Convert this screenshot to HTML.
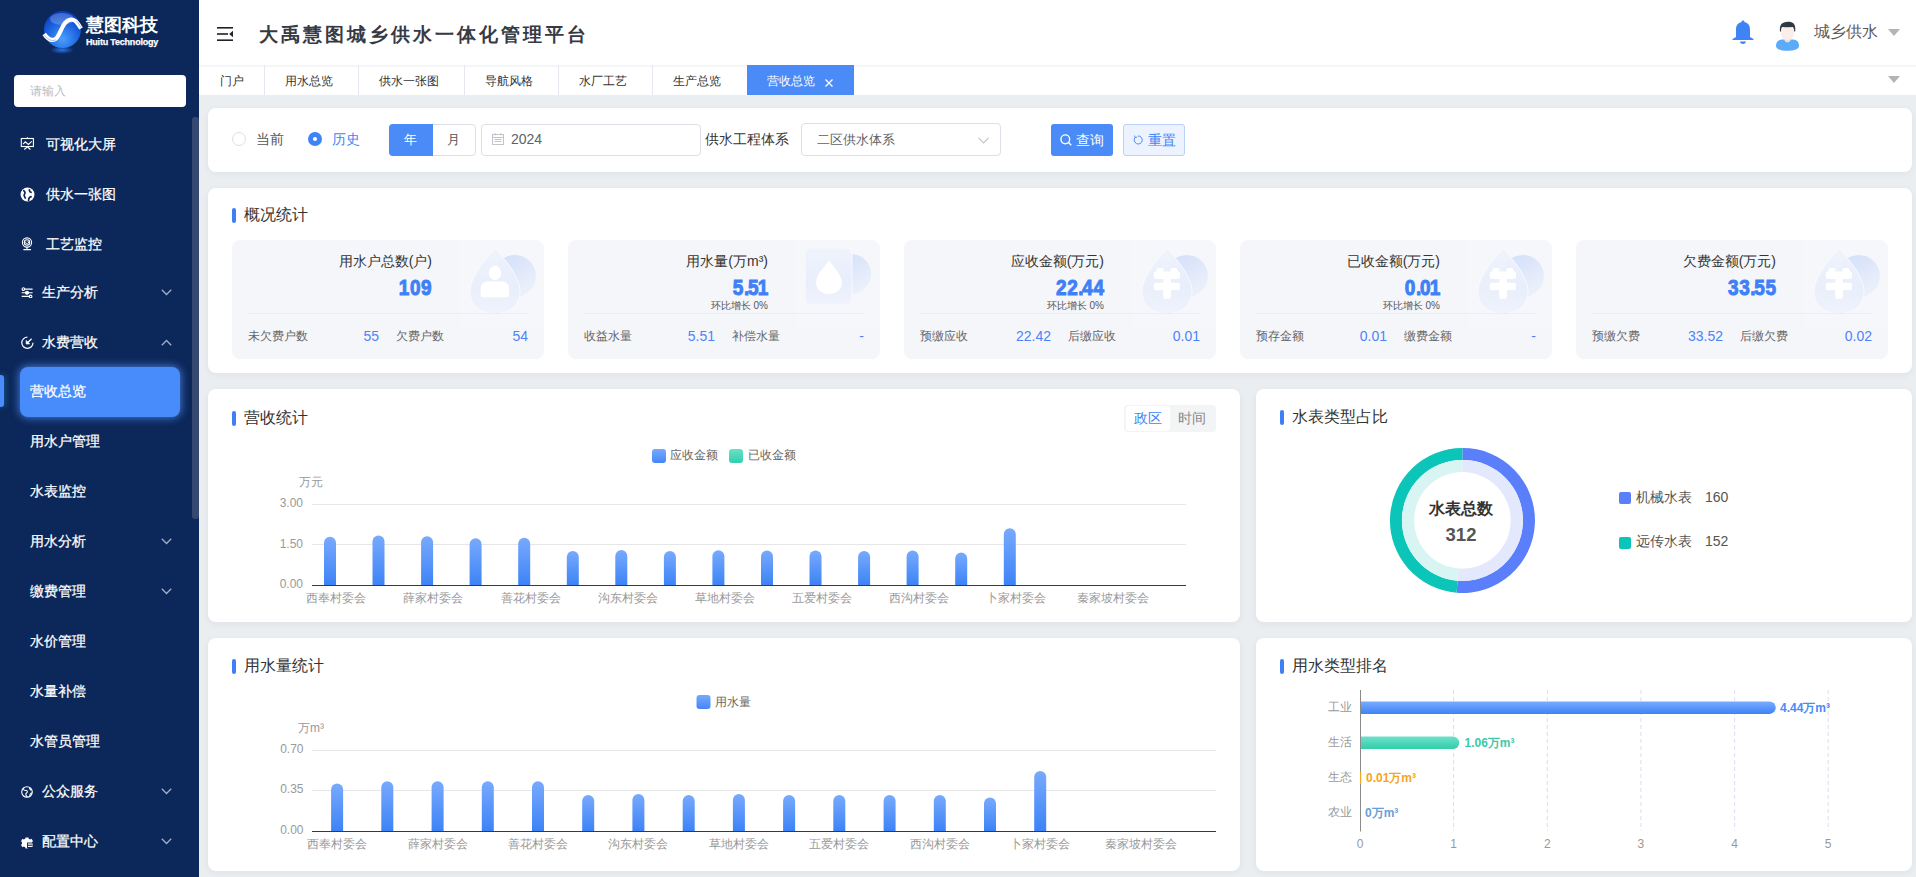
<!DOCTYPE html>
<html><head><meta charset="utf-8">
<style>
*{box-sizing:border-box;margin:0;padding:0}
html,body{width:1916px;height:877px;overflow:hidden;background:#ebeef1;font-family:"Liberation Sans",sans-serif;color:#333}
.abs{position:absolute}
.nw{white-space:nowrap}
#side{position:absolute;left:0;top:0;width:199px;height:877px;background:#0c2759}
.mi{position:absolute;left:0;width:199px;height:20px;line-height:20px;color:#fff;font-size:14px;white-space:nowrap;-webkit-text-stroke:0.25px #fff}
.mi .ic{position:absolute;left:20px;top:3px;width:14px;height:14px}
.mi .tx{position:absolute;left:46px;top:0}
.mi .sub{left:30px}
.chev{position:absolute}
#hdr{position:absolute;left:199px;top:0;width:1717px;height:65px;background:#fff}
#tabs{position:absolute;left:199px;top:65px;width:1717px;height:30px;background:#fff;box-shadow:inset 0 2px 3px -2px rgba(0,0,0,.06)}
.tab{position:absolute;top:0;height:30px;line-height:30px;font-size:12px;color:#333;text-align:center;border-right:1px solid #e6e8ee}
.card{position:absolute;background:#fff;border-radius:8px;box-shadow:0 2px 7px rgba(40,50,70,.06)}
.ttl{position:absolute;font-size:16px;color:#333;line-height:16px;white-space:nowrap}
.ttl:before{content:"";position:absolute;left:-12px;top:1px;width:4px;height:15px;border-radius:2px;background:#3e7ff5}
.sc{position:absolute;top:240px;width:312px;height:119px;background:#f5f6fa;border-radius:8px;overflow:hidden}
.sc .t{position:absolute;top:13px;right:112px;font-size:14px;color:#333;line-height:16px;white-space:nowrap}
.sc .v{position:absolute;top:35px;right:112px;font-size:22px;line-height:26px;color:#3f80f6;font-weight:bold;white-space:nowrap;transform:scaleX(.86);transform-origin:right center;letter-spacing:0.8px;margin-right:-0.7px;-webkit-text-stroke:1px #3f80f6}
.sc .v .o{margin-left:-1.8px}.sc .v .p{letter-spacing:-1.6px}
.sc .hb{position:absolute;top:60px;right:112px;font-size:10px;line-height:12px;color:#555;white-space:nowrap}
.sc .dv{position:absolute;left:16px;right:16px;top:73px;height:1px;background:#eceef4}
.sc .bl{position:absolute;top:89px;font-size:12px;line-height:14px;color:#666;white-space:nowrap}
.sc .bn{position:absolute;top:89px;font-size:14px;line-height:14px;color:#4d83f7;white-space:nowrap;text-align:right}
.axl{position:absolute;font-size:12px;color:#999;line-height:12px;white-space:nowrap}
</style></head><body>
<svg width="0" height="0" style="position:absolute"><defs>
<linearGradient id="cg" x1="0.2" y1="0" x2="0.8" y2="1"><stop offset="0" stop-color="#d3e0f9"/><stop offset="1" stop-color="#eef2fb"/></linearGradient>
<linearGradient id="dg" x1="0" y1="0" x2="0" y2="1"><stop offset="0" stop-color="#eff3fc" stop-opacity=".95"/><stop offset=".6" stop-color="#e8eefb" stop-opacity=".95"/><stop offset="1" stop-color="#eff2fb" stop-opacity=".95"/></linearGradient>
</defs></svg>

<!-- SIDEBAR -->
<div id="side">
 <svg class="abs" style="left:40px;top:8px" width="46" height="48" viewBox="0 0 46 48">
  <defs>
   <radialGradient id="gb" cx="50%" cy="75%" r="70%"><stop offset="0" stop-color="#4aa0ff"/><stop offset=".6" stop-color="#1d64e0"/><stop offset="1" stop-color="#0b3fc0"/></radialGradient>
   <radialGradient id="gl" cx="50%" cy="50%" r="50%"><stop offset="0" stop-color="#2a7bff" stop-opacity=".9"/><stop offset="1" stop-color="#2a7bff" stop-opacity="0"/></radialGradient>
  </defs>
  <ellipse cx="22" cy="42" rx="12" ry="4" fill="url(#gl)"/>
  <circle cx="22.5" cy="21.6" r="18.5" fill="url(#gb)"/>
  <ellipse cx="22" cy="11" rx="12" ry="6" fill="#fff" opacity=".22"/>
  <path d="M4.2 26 C8 31.5 12 33 15.5 31 C19 29 20.5 21 25 15 C28.5 11 33 10.5 36 13.5 C38 15.5 39.5 18 41 20.5" fill="none" stroke="#fff" stroke-width="4.2"/>
  <path d="M4.6 27.2 C8 32 12 33.6 15.8 31.8 M36.5 13 C38.5 15 39.8 17.5 41 19.5" fill="none" stroke="#5a90e8" stroke-width=".7" opacity=".8"/>
 </svg>
 <div class="abs nw" style="left:86px;top:13px;font-size:18px;line-height:24px;font-weight:bold;color:#fff;letter-spacing:0px">慧图科技</div>
 <div class="abs nw" style="left:86px;top:37px;font-size:9px;line-height:11px;font-weight:bold;color:#fff;letter-spacing:-0.2px;-webkit-text-stroke:0.25px #fff">Huitu Technology</div>
 <div class="abs" style="left:14px;top:75px;width:172px;height:32px;background:#fff;border-radius:4px"></div>
 <div class="abs nw" style="left:30px;top:83px;font-size:12px;line-height:16px;color:#b8bcc6">请输入</div>
 <div class="abs" style="left:192px;top:117px;width:7px;height:402px;background:#36486f;border-radius:3px"></div>

 <div class="mi" style="top:134px">
  <svg class="ic" style="left:20px;top:1px;width:14px;height:16px" width="14" height="16" viewBox="0 0 14 16" fill="none" stroke="#fff" stroke-width="1.1"><rect x="1.3" y="3.5" width="12.1" height="8"/><path d="M3.1 9.2 L5.3 6.8 L8.4 9.4 L11.8 6.3"/><path d="M4.3 14.5 L7.4 11.8 L10.4 14.5 M7.4 2.2 V3.5"/></svg>
  <span class="tx" style="left:46px">可视化大屏</span></div>
 <div class="mi" style="top:184px">
  <svg class="ic" style="left:19.5px;top:2.5px;width:15px;height:15px" width="15" height="15" viewBox="0 0 14 14"><circle cx="7" cy="7" r="6.5" fill="#fff"/><path d="M3 3 C5 4 5 6 4 7 C3 8 5 9 5 11 M9 2 C8 4 10 5 11 5 M8 13 C8 11 9 9 11 9" fill="none" stroke="#0c2759" stroke-width="1.6"/></svg>
  <span class="tx" style="left:46px">供水一张图</span></div>
 <div class="mi" style="top:234px">
  <svg class="ic" style="left:21px;top:3px;width:13px;height:14px" width="13" height="14" viewBox="0 0 13 14" fill="none" stroke="#fff" stroke-width="1.1"><circle cx="6" cy="5.5" r="4.6"/><circle cx="6" cy="5.5" r="2.7"/><path d="M6.8 4.2 A1.4 1.4 0 1 1 5 4.6" stroke-width="1"/><path d="M6 10.1 V12.3 M2.4 12.6 H10"/></svg>
  <span class="tx" style="left:46px">工艺监控</span></div>
 <div class="mi" style="top:282px">
  <svg class="ic" style="left:21px;top:3px;width:12px;height:13px" width="12" height="13" viewBox="0 0 12 13" fill="none" stroke="#fff" stroke-width="1.1"><path d="M3.7 4.1 H11.6 M0.7 7.7 H11.6 M0.7 11.4 H8.3"/><circle cx="2.4" cy="4.1" r="1.3"/><circle cx="6" cy="7.7" r="1.5" fill="#fff"/><circle cx="9.6" cy="11.4" r="1.3"/></svg>
  <span class="tx" style="left:42px">生产分析</span>
  <svg class="chev" width="11" height="7" viewBox="0 0 11 7" fill="none" stroke="#a3aec8" stroke-width="1.3" style="left:160.5px;top:6.5px"><path d="M0.8 0.8 L5.5 5.5 L10.2 0.8"/></svg></div>
 <div class="mi" style="top:332px">
  <svg class="ic" style="left:20.7px;top:4.3px;width:13px;height:13px" width="13" height="13" viewBox="0 0 13 13" fill="none" stroke="#fff" stroke-width="1.2"><path d="M12 6.8 A5.6 5.6 0 1 1 6.4 1.2"/><path d="M10.6 2.8 L6 7.2"/><path d="M5.2 4.4 V7.9 H8.6 Z" fill="#fff" stroke-width=".8"/></svg>
  <span class="tx" style="left:42px">水费营收</span>
  <svg class="chev" width="11" height="7" viewBox="0 0 11 7" fill="none" stroke="#a3aec8" stroke-width="1.3" style="left:160.5px;top:6.5px"><path d="M0.8 6.2 L5.5 1.5 L10.2 6.2"/></svg></div>

 <div class="abs" style="left:0;top:375px;width:4px;height:32px;background:#4a8cfb;border-radius:0 3px 3px 0;box-shadow:0 0 6px rgba(40,200,255,.5)"></div>
 <div class="abs" style="left:20px;top:367px;width:160px;height:50px;background:#488cfc;border-radius:8px;box-shadow:0 0 8px 1px rgba(85,150,255,.75)"></div>
 <div class="mi" style="top:381px"><span class="tx" style="left:30px">营收总览</span></div>
 <div class="mi" style="top:431px"><span class="tx" style="left:30px">用水户管理</span></div>
 <div class="mi" style="top:481px"><span class="tx" style="left:30px">水表监控</span></div>
 <div class="mi" style="top:531px"><span class="tx" style="left:30px">用水分析</span>
  <svg class="chev" width="11" height="7" viewBox="0 0 11 7" fill="none" stroke="#a3aec8" stroke-width="1.3" style="left:160.5px;top:6.5px"><path d="M0.8 0.8 L5.5 5.5 L10.2 0.8"/></svg></div>
 <div class="mi" style="top:581px"><span class="tx" style="left:30px">缴费管理</span>
  <svg class="chev" width="11" height="7" viewBox="0 0 11 7" fill="none" stroke="#a3aec8" stroke-width="1.3" style="left:160.5px;top:6.5px"><path d="M0.8 0.8 L5.5 5.5 L10.2 0.8"/></svg></div>
 <div class="mi" style="top:631px"><span class="tx" style="left:30px">水价管理</span></div>
 <div class="mi" style="top:681px"><span class="tx" style="left:30px">水量补偿</span></div>
 <div class="mi" style="top:731px"><span class="tx" style="left:30px">水管员管理</span></div>
 <div class="mi" style="top:781px">
  <svg class="ic" style="left:21px;top:5px;width:12px;height:12px" width="12" height="12" viewBox="0 0 12 12" fill="none" stroke="#fff" stroke-width="1.1"><circle cx="6" cy="6" r="5.3"/><path d="M2.5 1.8 C1.8 3.5 3.5 4.8 5 4.5 C6.5 4.2 6.8 6 5.5 7 C4.2 8 5 10 6.5 11 M8.5 1.5 C8 3 9.5 3.5 10.2 4.5 M11 7 C9.5 7 8.5 8.5 9 10"/></svg>
  <span class="tx" style="left:42px">公众服务</span>
  <svg class="chev" width="11" height="7" viewBox="0 0 11 7" fill="none" stroke="#a3aec8" stroke-width="1.3" style="left:160.5px;top:6.5px"><path d="M0.8 0.8 L5.5 5.5 L10.2 0.8"/></svg></div>
 <div class="mi" style="top:831px">
  <svg class="ic" style="left:21px;top:5.5px;width:12px;height:12px" width="12" height="12" viewBox="0 0 13 13" fill="#fff"><path d="M5 0.5 H8 L8.5 2 L10 2.8 L11.5 2 L13 4.5 L12 5.5 V7.5 L13 8.5 L11.5 11 L10 10.2 L8.5 11 L8 12.5 H5 L4.5 11 L3 10.2 L1.5 11 L0 8.5 L1 7.5 V5.5 L0 4.5 L1.5 2 L3 2.8 L4.5 2 Z"/><rect x="6.5" y="6" width="6" height="6.5" fill="#0c2759"/><rect x="7.5" y="7" width="5" height="1.3"/><rect x="7.5" y="9.5" width="5" height="1.3"/></svg>
  <span class="tx" style="left:42px">配置中心</span>
  <svg class="chev" width="11" height="7" viewBox="0 0 11 7" fill="none" stroke="#a3aec8" stroke-width="1.3" style="left:160.5px;top:6.5px"><path d="M0.8 0.8 L5.5 5.5 L10.2 0.8"/></svg></div>
</div>

<!-- HEADER -->
<div id="hdr"></div>
<svg class="abs" style="left:217px;top:27px" width="16" height="14" viewBox="0 0 16 14" fill="#1f2329"><rect x="0" y="0" width="16" height="1.6"/><rect x="0" y="6.2" width="11" height="1.6"/><rect x="0" y="12.4" width="16" height="1.6"/><path d="M16 3.8 L12.2 7 L16 10.2 Z"/></svg>
<div class="abs nw" style="left:259px;top:22px;font-size:19px;line-height:26px;font-weight:bold;color:#363a45;letter-spacing:3.0px">大禹慧图城乡供水一体化管理平台</div>
<svg class="abs" style="left:1732px;top:20px" width="22" height="24" viewBox="0 0 22 24" fill="#3f84f7"><path d="M11 0.5 C12 0.5 12.5 1.2 12.5 2 C16 2.8 18 5.5 18 9.5 V17 L21.5 19 V20 H0.5 V19 L4 17 V9.5 C4 5.5 6 2.8 9.5 2 C9.5 1.2 10 0.5 11 0.5 Z"/><path d="M8 21.5 H14 C14 23 12.5 24 11 24 C9.5 24 8 23 8 21.5 Z"/></svg>
<svg class="abs" style="left:1775px;top:21px" width="25" height="30" viewBox="0 0 25 30"><path d="M1 25 C1 21 3 19 7 18.6 L9.5 18.5 C10.5 20.5 11.5 21.3 12.5 21.3 C13.5 21.3 14.5 20.5 15.5 18.5 L18 18.6 C22 19 24 21 24 25 C24 28.5 18 29.8 12.5 29.8 C7 29.8 1 28.5 1 25 Z" fill="#5aabf9"/><path d="M9.3 15 H15.7 V19 C15 20.6 14 21.2 12.5 21.2 C11 21.2 10 20.6 9.3 19 Z" fill="#f0dcd5"/><path d="M6 7 V12.5 C6 16.5 9 18.8 12.5 18.8 C16 18.8 19 16.5 19 12.5 V7 Z" fill="#fbeee9"/><path d="M5 10.5 C4.5 5 6 2.5 9 1.5 C11 0.6 14 0.4 16.5 1.2 C19.5 2.2 20.8 5 20.2 10.5 L19.2 10.5 C19.2 8 18.7 6.5 17.6 6 C14 6.4 10.5 6.4 7.4 6 C6.3 6.5 6 8 6 10.5 Z" fill="#2e3a44"/></svg>
<div class="abs nw" style="left:1814px;top:22px;font-size:16px;line-height:20px;color:#5a5a5a">城乡供水</div>
<svg class="abs" style="left:1888px;top:29px" width="12" height="8" viewBox="0 0 12 8" fill="#b4b4b4"><path d="M0 0 H12 L6 7 Z"/></svg>
<div id="tabs"></div>
<div class="abs" style="left:199px;top:65px;width:1717px;height:3px;background:linear-gradient(#f0f1f4,#fff)"></div>
<div class="abs nw" style="left:220px;top:73px;font-size:12px;line-height:16px;color:#333">门户</div>
<div class="abs" style="left:264px;top:65px;width:1px;height:30px;background:#e4e7ed"></div>
<div class="abs nw" style="left:285px;top:73px;font-size:12px;line-height:16px;color:#333">用水总览</div>
<div class="abs" style="left:358px;top:65px;width:1px;height:30px;background:#e4e7ed"></div>
<div class="abs nw" style="left:379px;top:73px;font-size:12px;line-height:16px;color:#333">供水一张图</div>
<div class="abs" style="left:464px;top:65px;width:1px;height:30px;background:#e4e7ed"></div>
<div class="abs nw" style="left:485px;top:73px;font-size:12px;line-height:16px;color:#333">导航风格</div>
<div class="abs" style="left:558px;top:65px;width:1px;height:30px;background:#e4e7ed"></div>
<div class="abs nw" style="left:579px;top:73px;font-size:12px;line-height:16px;color:#333">水厂工艺</div>
<div class="abs" style="left:652px;top:65px;width:1px;height:30px;background:#e4e7ed"></div>
<div class="abs nw" style="left:673px;top:73px;font-size:12px;line-height:16px;color:#333">生产总览</div>
<div class="abs" style="left:747px;top:65px;width:107px;height:30px;background:#4a8bf7"></div>
<div class="abs nw" style="left:767px;top:73px;font-size:12px;line-height:16px;color:#fff">营收总览</div>
<svg class="abs" style="left:825px;top:79px" width="8" height="8" viewBox="0 0 8 8" stroke="#fff" stroke-width="1.3"><path d="M0.5 0.5 L7.5 7.5 M7.5 0.5 L0.5 7.5"/></svg>
<svg class="abs" style="left:1888px;top:76px" width="12" height="8" viewBox="0 0 12 8" fill="#b4b4b4"><path d="M0 0 H12 L6 7 Z"/></svg>

<!-- FILTER CARD -->
<div class="card" style="left:208px;top:108px;width:1704px;height:64px"></div>
<div class="abs" style="left:232px;top:132px;width:14px;height:14px;border:1px solid #dcdfe6;border-radius:50%;background:#fff"></div>
<div class="abs nw" style="left:256px;top:130px;font-size:14px;line-height:18px;color:#555">当前</div>
<div class="abs" style="left:308px;top:132px;width:14px;height:14px;border-radius:50%;background:#3f84f7"></div>
<div class="abs" style="left:313px;top:137px;width:4px;height:4px;border-radius:50%;background:#fff"></div>
<div class="abs nw" style="left:332px;top:130px;font-size:14px;line-height:18px;color:#3f84f7">历史</div>
<div class="abs" style="left:389px;top:124px;width:87px;height:32px;border:1px solid #dcdfe6;border-radius:4px;background:#fff"></div>
<div class="abs" style="left:389px;top:124px;width:44px;height:32px;border-radius:4px 0 0 4px;background:#4a8bf7"></div>
<div class="abs nw" style="left:404px;top:131px;font-size:13px;line-height:17px;color:#fff">年</div>
<div class="abs nw" style="left:447px;top:131px;font-size:13px;line-height:17px;color:#555">月</div>
<div class="abs" style="left:481px;top:124px;width:220px;height:32px;border:1px solid #dcdfe6;border-radius:4px;background:#fff"></div>
<svg class="abs" style="left:492px;top:133px" width="12" height="12" viewBox="0 0 12 12" fill="none" stroke="#c0c4cc" stroke-width="1"><rect x="0.5" y="1.5" width="11" height="10"/><path d="M0.5 4.5 H11.5 M3 0 V2.5 M9 0 V2.5 M2.5 6.5 H9.5 M2.5 8.5 H9.5"/></svg>
<div class="abs nw" style="left:511px;top:130px;font-size:14px;line-height:18px;color:#606266">2024</div>
<div class="abs nw" style="left:705px;top:130px;font-size:14px;line-height:18px;color:#333">供水工程体系</div>
<div class="abs" style="left:801px;top:123px;width:200px;height:33px;border:1px solid #dcdfe6;border-radius:4px;background:#fff"></div>
<div class="abs nw" style="left:817px;top:131px;font-size:13px;line-height:17px;color:#606266">二区供水体系</div>
<svg class="abs" style="left:978px;top:137px" width="11" height="7" viewBox="0 0 11 7" fill="none" stroke="#c0c4cc" stroke-width="1.2"><path d="M0.5 0.8 L5.5 5.8 L10.5 0.8"/></svg>
<div class="abs" style="left:1051px;top:124px;width:62px;height:32px;border-radius:3px;background:#4a8bf7"></div>
<svg class="abs" style="left:1060px;top:134px" width="12" height="12" viewBox="0 0 12 12" fill="none" stroke="#fff" stroke-width="1.4"><circle cx="5.3" cy="5.3" r="4.4"/><path d="M8.5 8.5 L11.3 11.3"/></svg>
<div class="abs nw" style="left:1076px;top:131px;font-size:14px;line-height:18px;color:#fff">查询</div>
<div class="abs" style="left:1123px;top:124px;width:62px;height:32px;border:1px solid #b8d2fb;border-radius:3px;background:#ecf3fe"></div>
<svg class="abs" style="left:1133px;top:135px" width="10" height="10" viewBox="0 0 10 10" fill="none" stroke="#4a8bf7" stroke-width="1"><path d="M2.2 2.4 A4 4 0 1 0 5 1"/><path d="M1.5 0.6 L2.2 2.6 L4.3 2"/></svg>
<div class="abs nw" style="left:1148px;top:131px;font-size:14px;line-height:18px;color:#3f84f7">重置</div>

<!-- STATS CARD -->
<div class="card" style="left:208px;top:188px;width:1704px;height:185px"></div>
<div class="ttl" style="left:244px;top:207px">概况统计</div>
<div class="sc" style="left:232px"><div class="abs" style="left:227px;top:0;width:85px;height:87px;background:rgba(255,255,255,.18)"></div><svg class="abs" style="left:230px;top:4px" width="80" height="74" viewBox="0 0 80 74"><circle cx="53" cy="32" r="21" fill="url(#cg)"/><path d="M33 4 C40 12 58 32 58 48 C58 62 47 69.5 33 69.5 C19 69.5 8 62 8 48 C8 32 26 12 33 4 Z" fill="url(#dg)" stroke="#fafbff" stroke-width="1"/><ellipse cx="33" cy="28.9" rx="6.2" ry="7.1" fill="#fff"/><path d="M18.7 51.3 V44.5 C18.7 40 21.5 37.5 26 37.5 H40 C44.5 37.5 47 40 47 44.5 V51.3 Q47 53.3 45 53.3 H20.7 Q18.7 53.3 18.7 51.3 Z" fill="#fff"/></svg><div class="t">用水户总数(户)</div><div class="v"><span class="o">1</span>09</div><div class="dv"></div><div class="bl" style="left:16px">未欠费户数</div><div class="bn" style="right:165px">55</div><div class="bl" style="left:164px">欠费户数</div><div class="bn" style="right:16px">54</div></div>
<div class="sc" style="left:568px"><div class="abs" style="left:227px;top:0;width:85px;height:87px;background:rgba(255,255,255,.18)"></div><svg class="abs" style="left:230px;top:4px" width="80" height="74" viewBox="0 0 80 74"><circle cx="53" cy="30" r="20" fill="url(#cg)"/><rect x="7" y="4" width="47" height="57" rx="6" fill="url(#dg)" stroke="#f7f9ff" stroke-width="1"/><path d="M31 16.5 C35 22 44 31 44 38.5 C44 45.5 38 50 31 50 C24 50 18 45.5 18 38.5 C18 31 27 22 31 16.5 Z" fill="#fff"/></svg><div class="t">用水量(万m³)</div><div class="v">5<span class="p">.</span>5<span class="o">1</span></div><div class="hb">环比增长 0%</div><div class="dv"></div><div class="bl" style="left:16px">收益水量</div><div class="bn" style="right:165px">5.51</div><div class="bl" style="left:164px">补偿水量</div><div class="bn" style="right:16px">-</div></div>
<div class="sc" style="left:904px"><div class="abs" style="left:227px;top:0;width:85px;height:87px;background:rgba(255,255,255,.18)"></div><svg class="abs" style="left:230px;top:4px" width="80" height="74" viewBox="0 0 80 74"><circle cx="53" cy="32" r="21" fill="url(#cg)"/><path d="M33 4 C40 12 58 32 58 48 C58 62 47 69.5 33 69.5 C19 69.5 8 62 8 48 C8 32 26 12 33 4 Z" fill="url(#dg)" stroke="#fafbff" stroke-width="1"/><g fill="#fff"><rect x="22.5" y="24" width="7" height="6" rx="2"/><rect x="36.5" y="24" width="7" height="6" rx="2"/><rect x="19.8" y="27.6" width="26.2" height="7.4" rx="2"/><rect x="19.8" y="38.8" width="26.2" height="7.4" rx="2"/><rect x="29.3" y="33" width="7.6" height="22" rx="2"/></g></svg><div class="t">应收金额(万元)</div><div class="v">22<span class="p">.</span>44</div><div class="hb">环比增长 0%</div><div class="dv"></div><div class="bl" style="left:16px">预缴应收</div><div class="bn" style="right:165px">22.42</div><div class="bl" style="left:164px">后缴应收</div><div class="bn" style="right:16px">0.01</div></div>
<div class="sc" style="left:1240px"><div class="abs" style="left:227px;top:0;width:85px;height:87px;background:rgba(255,255,255,.18)"></div><svg class="abs" style="left:230px;top:4px" width="80" height="74" viewBox="0 0 80 74"><circle cx="53" cy="32" r="21" fill="url(#cg)"/><path d="M33 4 C40 12 58 32 58 48 C58 62 47 69.5 33 69.5 C19 69.5 8 62 8 48 C8 32 26 12 33 4 Z" fill="url(#dg)" stroke="#fafbff" stroke-width="1"/><g fill="#fff"><rect x="22.5" y="24" width="7" height="6" rx="2"/><rect x="36.5" y="24" width="7" height="6" rx="2"/><rect x="19.8" y="27.6" width="26.2" height="7.4" rx="2"/><rect x="19.8" y="38.8" width="26.2" height="7.4" rx="2"/><rect x="29.3" y="33" width="7.6" height="22" rx="2"/></g></svg><div class="t">已收金额(万元)</div><div class="v">0<span class="p">.</span>0<span class="o">1</span></div><div class="hb">环比增长 0%</div><div class="dv"></div><div class="bl" style="left:16px">预存金额</div><div class="bn" style="right:165px">0.01</div><div class="bl" style="left:164px">缴费金额</div><div class="bn" style="right:16px">-</div></div>
<div class="sc" style="left:1576px"><div class="abs" style="left:227px;top:0;width:85px;height:87px;background:rgba(255,255,255,.18)"></div><svg class="abs" style="left:230px;top:4px" width="80" height="74" viewBox="0 0 80 74"><circle cx="53" cy="32" r="21" fill="url(#cg)"/><path d="M33 4 C40 12 58 32 58 48 C58 62 47 69.5 33 69.5 C19 69.5 8 62 8 48 C8 32 26 12 33 4 Z" fill="url(#dg)" stroke="#fafbff" stroke-width="1"/><g fill="#fff"><rect x="22.5" y="24" width="7" height="6" rx="2"/><rect x="36.5" y="24" width="7" height="6" rx="2"/><rect x="19.8" y="27.6" width="26.2" height="7.4" rx="2"/><rect x="19.8" y="38.8" width="26.2" height="7.4" rx="2"/><rect x="29.3" y="33" width="7.6" height="22" rx="2"/></g></svg><div class="t">欠费金额(万元)</div><div class="v">33<span class="p">.</span>55</div><div class="dv"></div><div class="bl" style="left:16px">预缴欠费</div><div class="bn" style="right:165px">33.52</div><div class="bl" style="left:164px">后缴欠费</div><div class="bn" style="right:16px">0.02</div></div>

<!-- CHART CARDS -->
<div class="card" style="left:208px;top:389px;width:1032px;height:233px"></div>
<div class="card" style="left:1256px;top:389px;width:656px;height:233px"></div>
<div class="card" style="left:208px;top:638px;width:1032px;height:233px"></div>
<div class="card" style="left:1256px;top:638px;width:656px;height:233px"></div>

<div class="ttl" style="left:244px;top:410px">营收统计</div>
<div class="abs" style="left:1124px;top:405px;width:92px;height:27px;background:#f3f4f6;border-radius:4px"></div>
<div class="abs" style="left:1126px;top:406px;width:44px;height:25px;background:#fff;border-radius:3px"></div>
<div class="abs nw" style="left:1134px;top:409px;font-size:14px;line-height:18px;color:#3f84f7">政区</div>
<div class="abs nw" style="left:1178px;top:409px;font-size:14px;line-height:18px;color:#888">时间</div>
<div class="ttl" style="left:1292px;top:409px">水表类型占比</div>
<div class="ttl" style="left:244px;top:658px">用水量统计</div>
<div class="ttl" style="left:1292px;top:658px">用水类型排名</div>
<svg class="abs" style="left:0;top:0" width="1916" height="877" viewBox="0 0 1916 877" font-family="Liberation Sans, sans-serif">
<defs>
<linearGradient id="bb" x1="0" y1="0" x2="0" y2="1"><stop offset="0" stop-color="#78aafd"/><stop offset="1" stop-color="#3d83f6"/></linearGradient>
<linearGradient id="lb" x1="0" y1="0" x2="0" y2="1"><stop offset="0" stop-color="#76a9fd"/><stop offset="1" stop-color="#4486f7"/></linearGradient>
<linearGradient id="lt" x1="0" y1="0" x2="0" y2="1"><stop offset="0" stop-color="#6ae0c8"/><stop offset="1" stop-color="#32cfab"/></linearGradient>
<linearGradient id="hb" x1="0" y1="0" x2="0" y2="1"><stop offset="0" stop-color="#7aacfd"/><stop offset="1" stop-color="#3e83f6"/></linearGradient>
<linearGradient id="ht" x1="0" y1="0" x2="0" y2="1"><stop offset="0" stop-color="#6ee0c9"/><stop offset="1" stop-color="#31cea9"/></linearGradient>
</defs>
<line x1="312" y1="504.5" x2="1186" y2="504.5" stroke="#e6e6e6" stroke-width="1"/>
<line x1="312" y1="544.5" x2="1186" y2="544.5" stroke="#e6e6e6" stroke-width="1"/>
<line x1="312" y1="585.5" x2="1186" y2="585.5" stroke="#3a3a3a" stroke-width="1"/>
<text x="303" y="507" text-anchor="end" font-size="12" fill="#999">3.00</text>
<text x="303" y="547.5" text-anchor="end" font-size="12" fill="#999">1.50</text>
<text x="303" y="588" text-anchor="end" font-size="12" fill="#999">0.00</text>
<text x="299" y="486" font-size="12" fill="#999">万元</text>
<path d="M324.0 585 V542.80 A6.0 6.0 0 0 1 336.0 542.80 V585 Z" fill="url(#bb)"/>
<path d="M372.5 585 V541.40 A6.0 6.0 0 0 1 384.5 541.40 V585 Z" fill="url(#bb)"/>
<path d="M421.1 585 V542.30 A6.0 6.0 0 0 1 433.1 542.30 V585 Z" fill="url(#bb)"/>
<path d="M469.6 585 V544.30 A6.0 6.0 0 0 1 481.6 544.30 V585 Z" fill="url(#bb)"/>
<path d="M518.2 585 V543.70 A6.0 6.0 0 0 1 530.2 543.70 V585 Z" fill="url(#bb)"/>
<path d="M566.8 585 V557.00 A6.0 6.0 0 0 1 578.8 557.00 V585 Z" fill="url(#bb)"/>
<path d="M615.3 585 V556.00 A6.0 6.0 0 0 1 627.3 556.00 V585 Z" fill="url(#bb)"/>
<path d="M663.9 585 V557.00 A6.0 6.0 0 0 1 675.9 557.00 V585 Z" fill="url(#bb)"/>
<path d="M712.4 585 V556.20 A6.0 6.0 0 0 1 724.4 556.20 V585 Z" fill="url(#bb)"/>
<path d="M761.0 585 V556.50 A6.0 6.0 0 0 1 773.0 556.50 V585 Z" fill="url(#bb)"/>
<path d="M809.5 585 V556.50 A6.0 6.0 0 0 1 821.5 556.50 V585 Z" fill="url(#bb)"/>
<path d="M858.1 585 V557.00 A6.0 6.0 0 0 1 870.1 557.00 V585 Z" fill="url(#bb)"/>
<path d="M906.6 585 V556.50 A6.0 6.0 0 0 1 918.6 556.50 V585 Z" fill="url(#bb)"/>
<path d="M955.2 585 V558.50 A6.0 6.0 0 0 1 967.2 558.50 V585 Z" fill="url(#bb)"/>
<path d="M1003.8 585 V534.30 A6.0 6.0 0 0 1 1015.8 534.30 V585 Z" fill="url(#bb)"/>
<text x="336.3" y="601.5" text-anchor="middle" font-size="12" fill="#999">西奉村委会</text>
<text x="433.4" y="601.5" text-anchor="middle" font-size="12" fill="#999">薛家村委会</text>
<text x="530.5" y="601.5" text-anchor="middle" font-size="12" fill="#999">善花村委会</text>
<text x="627.6" y="601.5" text-anchor="middle" font-size="12" fill="#999">沟东村委会</text>
<text x="724.7" y="601.5" text-anchor="middle" font-size="12" fill="#999">草地村委会</text>
<text x="821.8" y="601.5" text-anchor="middle" font-size="12" fill="#999">五爱村委会</text>
<text x="918.9" y="601.5" text-anchor="middle" font-size="12" fill="#999">西沟村委会</text>
<text x="1016.1" y="601.5" text-anchor="middle" font-size="12" fill="#999">卜家村委会</text>
<text x="1113.2" y="601.5" text-anchor="middle" font-size="12" fill="#999">秦家坡村委会</text>
<rect x="652" y="449" width="14" height="14" rx="3" fill="url(#lb)"/>
<text x="670" y="459" font-size="12" fill="#666">应收金额</text>
<rect x="729" y="449" width="14" height="14" rx="3" fill="url(#lt)"/>
<text x="748" y="459" font-size="12" fill="#666">已收金额</text>
<line x1="312" y1="750.5" x2="1216" y2="750.5" stroke="#e6e6e6" stroke-width="1"/>
<line x1="312" y1="790.5" x2="1216" y2="790.5" stroke="#e6e6e6" stroke-width="1"/>
<line x1="312" y1="831.5" x2="1216" y2="831.5" stroke="#3a3a3a" stroke-width="1"/>
<text x="303.5" y="753" text-anchor="end" font-size="12" fill="#999">0.70</text>
<text x="303.5" y="793.3" text-anchor="end" font-size="12" fill="#999">0.35</text>
<text x="303.5" y="833.8" text-anchor="end" font-size="12" fill="#999">0.00</text>
<text x="298" y="732" font-size="12" fill="#999">万m³</text>
<path d="M331.1 831 V789.60 A6.0 6.0 0 0 1 343.1 789.60 V831 Z" fill="url(#bb)"/>
<path d="M381.3 831 V787.30 A6.0 6.0 0 0 1 393.3 787.30 V831 Z" fill="url(#bb)"/>
<path d="M431.6 831 V787.30 A6.0 6.0 0 0 1 443.6 787.30 V831 Z" fill="url(#bb)"/>
<path d="M481.8 831 V787.30 A6.0 6.0 0 0 1 493.8 787.30 V831 Z" fill="url(#bb)"/>
<path d="M532.0 831 V787.30 A6.0 6.0 0 0 1 544.0 787.30 V831 Z" fill="url(#bb)"/>
<path d="M582.2 831 V801.00 A6.0 6.0 0 0 1 594.2 801.00 V831 Z" fill="url(#bb)"/>
<path d="M632.4 831 V800.00 A6.0 6.0 0 0 1 644.4 800.00 V831 Z" fill="url(#bb)"/>
<path d="M682.7 831 V801.00 A6.0 6.0 0 0 1 694.7 801.00 V831 Z" fill="url(#bb)"/>
<path d="M732.9 831 V800.00 A6.0 6.0 0 0 1 744.9 800.00 V831 Z" fill="url(#bb)"/>
<path d="M783.1 831 V801.00 A6.0 6.0 0 0 1 795.1 801.00 V831 Z" fill="url(#bb)"/>
<path d="M833.3 831 V801.00 A6.0 6.0 0 0 1 845.3 801.00 V831 Z" fill="url(#bb)"/>
<path d="M883.6 831 V801.00 A6.0 6.0 0 0 1 895.6 801.00 V831 Z" fill="url(#bb)"/>
<path d="M933.8 831 V801.00 A6.0 6.0 0 0 1 945.8 801.00 V831 Z" fill="url(#bb)"/>
<path d="M984.0 831 V803.40 A6.0 6.0 0 0 1 996.0 803.40 V831 Z" fill="url(#bb)"/>
<path d="M1034.2 831 V777.00 A6.0 6.0 0 0 1 1046.2 777.00 V831 Z" fill="url(#bb)"/>
<text x="337.1" y="848" text-anchor="middle" font-size="12" fill="#999">西奉村委会</text>
<text x="437.6" y="848" text-anchor="middle" font-size="12" fill="#999">薛家村委会</text>
<text x="538.0" y="848" text-anchor="middle" font-size="12" fill="#999">善花村委会</text>
<text x="638.4" y="848" text-anchor="middle" font-size="12" fill="#999">沟东村委会</text>
<text x="738.9" y="848" text-anchor="middle" font-size="12" fill="#999">草地村委会</text>
<text x="839.3" y="848" text-anchor="middle" font-size="12" fill="#999">五爱村委会</text>
<text x="939.8" y="848" text-anchor="middle" font-size="12" fill="#999">西沟村委会</text>
<text x="1040.2" y="848" text-anchor="middle" font-size="12" fill="#999">卜家村委会</text>
<text x="1140.7" y="848" text-anchor="middle" font-size="12" fill="#999">秦家坡村委会</text>
<rect x="696.5" y="695" width="14" height="14" rx="3" fill="url(#lb)"/>
<text x="715" y="706" font-size="12" fill="#666">用水量</text>
<path d="M1462.40 447.90 A72.5 72.5 0 1 1 1456.57 592.66 L1457.53 580.70 A60.5 60.5 0 1 0 1462.40 459.90 Z" fill="#5b7ffb"/>
<path d="M1456.57 592.66 A72.5 72.5 0 0 1 1462.40 447.90 L1462.40 459.90 A60.5 60.5 0 0 0 1457.53 580.70 Z" fill="#0bc5b9"/>
<path d="M1462.40 459.90 A60.5 60.5 0 1 1 1457.53 580.70 L1458.51 568.54 A48.3 48.3 0 1 0 1462.40 472.10 Z" fill="#e3e8fd"/>
<path d="M1457.53 580.70 A60.5 60.5 0 0 1 1462.40 459.90 L1462.40 472.10 A48.3 48.3 0 0 0 1458.51 568.54 Z" fill="#d8f5f3"/>
<text x="1461" y="514" text-anchor="middle" font-size="16" font-weight="bold" fill="#333">水表总数</text>
<text x="1461" y="540.5" text-anchor="middle" font-size="18.5" font-weight="bold" fill="#555">312</text>
<rect x="1619" y="492" width="12" height="12" rx="2" fill="#5b7ffb"/>
<text x="1636" y="502" font-size="14" fill="#555">机械水表</text>
<text x="1705" y="502" font-size="14" fill="#555">160</text>
<rect x="1619" y="537" width="12" height="12" rx="2" fill="#0bc5b9"/>
<text x="1636" y="546" font-size="14" fill="#555">远传水表</text>
<text x="1705" y="546" font-size="14" fill="#555">152</text>
<line x1="1453.6" y1="690" x2="1453.6" y2="831" stroke="#d9dff0" stroke-width="1" stroke-dasharray="4 3"/>
<line x1="1547.3" y1="690" x2="1547.3" y2="831" stroke="#d9dff0" stroke-width="1" stroke-dasharray="4 3"/>
<line x1="1640.9" y1="690" x2="1640.9" y2="831" stroke="#d9dff0" stroke-width="1" stroke-dasharray="4 3"/>
<line x1="1734.6" y1="690" x2="1734.6" y2="831" stroke="#d9dff0" stroke-width="1" stroke-dasharray="4 3"/>
<line x1="1828.2" y1="690" x2="1828.2" y2="831" stroke="#d9dff0" stroke-width="1" stroke-dasharray="4 3"/>
<line x1="1360.5" y1="690" x2="1360.5" y2="831.5" stroke="#8a8a8a" stroke-width="1"/>
<text x="1360.0" y="848" text-anchor="middle" font-size="12" fill="#999">0</text>
<text x="1453.6" y="848" text-anchor="middle" font-size="12" fill="#999">1</text>
<text x="1547.3" y="848" text-anchor="middle" font-size="12" fill="#999">2</text>
<text x="1640.9" y="848" text-anchor="middle" font-size="12" fill="#999">3</text>
<text x="1734.6" y="848" text-anchor="middle" font-size="12" fill="#999">4</text>
<text x="1828.2" y="848" text-anchor="middle" font-size="12" fill="#999">5</text>
<text x="1352" y="711.2" text-anchor="end" font-size="12" fill="#999">工业</text>
<text x="1352" y="746.3" text-anchor="end" font-size="12" fill="#999">生活</text>
<text x="1352" y="781.3" text-anchor="end" font-size="12" fill="#999">生态</text>
<text x="1352" y="816.1" text-anchor="end" font-size="12" fill="#999">农业</text>
<path d="M1361 701.50 H1769.56 A6.2 6.2 0 0 1 1769.56 713.90 H1361 Z" fill="url(#hb)"/>
<path d="M1361 736.60 H1453.06 A6.2 6.2 0 0 1 1453.06 749.00 H1361 Z" fill="url(#ht)"/>
<rect x="1360" y="772" width="1.2" height="12" fill="#f5a623"/>
<text x="1780" y="711.5" font-size="12" font-weight="bold" fill="#4a8bf7">4.44万m³</text>
<text x="1464.5" y="746.5" font-size="12" font-weight="bold" fill="#3ccaa8">1.06万m³</text>
<text x="1366" y="781.5" font-size="12" font-weight="bold" fill="#f5a623">0.01万m³</text>
<text x="1365" y="816.5" font-size="12" font-weight="bold" fill="#66a0d8">0万m³</text>
</svg>
</body></html>
